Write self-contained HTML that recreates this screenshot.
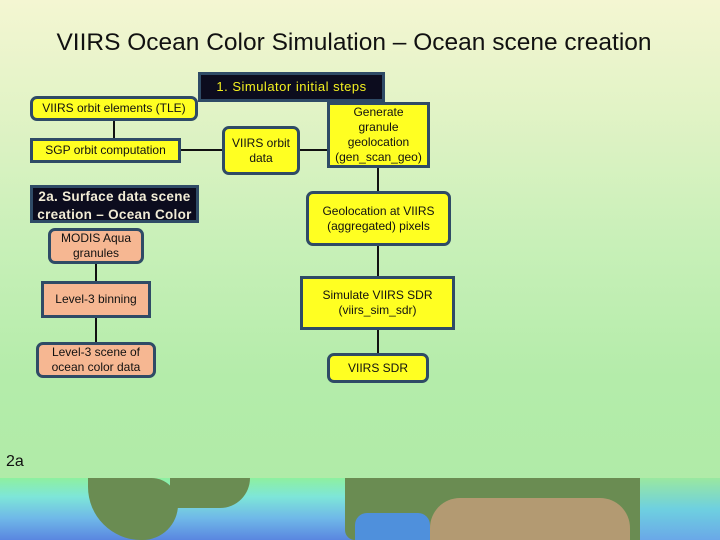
<!DOCTYPE html>
<html><head><style>
body{margin:0;width:720px;height:540px;overflow:hidden;position:relative;font-family:"Liberation Sans",sans-serif;
background:linear-gradient(180deg,#f4f6d2 0%,#e2f3c6 20%,#c8f0b8 45%,#b4ecaa 70%,#aeeaa6 100%);}
.b{position:absolute;box-sizing:border-box;border:3px solid #2f4b66;background:#ffff22;display:flex;align-items:center;justify-content:center;text-align:center;font-size:12px;line-height:15px;color:#111;}
.r{border-radius:7px}
.s{background:#f6b792}
.k{position:absolute;background:#0c0c1e;border:3px solid #2f4b66;box-sizing:border-box;text-align:center;font-size:13px;letter-spacing:.5px}
.l{position:absolute;background:#111}
.map{position:absolute;left:0;top:478px;width:720px;height:62px;overflow:hidden;
background:linear-gradient(180deg,#8ef0a0 0%,#7ee6d8 30%,#6fb8e8 65%,#5a86e0 100%);}
.land{position:absolute;background:#6a8c52;}
</style></head><body>
<div style="position:absolute;left:0;top:29px;width:708px;text-align:center;font-size:24.5px;color:#111">VIIRS Ocean Color Simulation – Ocean scene creation</div>

<div class="k" style="left:198px;top:72px;width:187px;height:30px;color:#f4f020;line-height:24px">1. Simulator initial steps</div>
<div class="b r" style="left:30px;top:96px;width:168px;height:25px">VIIRS orbit elements (TLE)</div>
<div class="b" style="left:30px;top:138px;width:151px;height:25px">SGP orbit computation</div>
<div class="b r" style="left:222px;top:126px;width:78px;height:49px">VIIRS orbit<br>data</div>
<div class="b" style="left:327px;top:102px;width:103px;height:66px">Generate<br>granule<br>geolocation<br>(gen_scan_geo)</div>
<div class="k" style="left:30px;top:185px;width:169px;height:38px;color:#f2ecd6;line-height:18px;font-size:13.5px;font-weight:bold;letter-spacing:.3px">2a. Surface data scene creation – Ocean Color</div>
<div class="b r s" style="left:48px;top:228px;width:96px;height:36px">MODIS Aqua<br>granules</div>
<div class="b s" style="left:41px;top:281px;width:110px;height:37px">Level-3 binning</div>
<div class="b r s" style="left:36px;top:342px;width:120px;height:36px">Level-3 scene of<br>ocean color data</div>
<div class="b r" style="left:306px;top:191px;width:145px;height:55px">Geolocation at VIIRS<br>(aggregated) pixels</div>
<div class="b" style="left:300px;top:276px;width:155px;height:54px">Simulate VIIRS SDR<br>(viirs_sim_sdr)</div>
<div class="b r" style="left:327px;top:353px;width:102px;height:30px">VIIRS SDR</div>

<div class="l" style="left:113px;top:121px;width:2px;height:17px"></div>
<div class="l" style="left:181px;top:149px;width:41px;height:2px"></div>
<div class="l" style="left:300px;top:149px;width:27px;height:2px"></div>
<div class="l" style="left:377px;top:168px;width:2px;height:23px"></div>
<div class="l" style="left:377px;top:246px;width:2px;height:30px"></div>
<div class="l" style="left:377px;top:330px;width:2px;height:23px"></div>
<div class="l" style="left:95px;top:264px;width:2px;height:17px"></div>
<div class="l" style="left:95px;top:318px;width:2px;height:24px"></div>

<div style="position:absolute;left:6px;top:453px;font-size:16px;color:#111">2a</div>

<div class="map">
<div class="land" style="left:88px;top:0;width:90px;height:62px;border-radius:0 30px 40px 60px"></div>
<div class="land" style="left:170px;top:0;width:80px;height:30px;border-radius:0 0 30px 0"></div>
<div class="land" style="left:345px;top:0;width:345px;height:62px;border-radius:0 0 40px 10px"></div>
<div class="land" style="left:430px;top:20px;width:200px;height:42px;background:#b39a72;border-radius:30px 30px 0 0"></div>
<div style="position:absolute;left:355px;top:35px;width:75px;height:27px;background:#4f90dc;border-radius:12px 12px 0 0"></div>
<div style="position:absolute;left:640px;top:0;width:80px;height:62px;background:linear-gradient(180deg,#9ae8a0,#6ed0e0,#6aa8e8)"></div>
</div>
</body></html>
